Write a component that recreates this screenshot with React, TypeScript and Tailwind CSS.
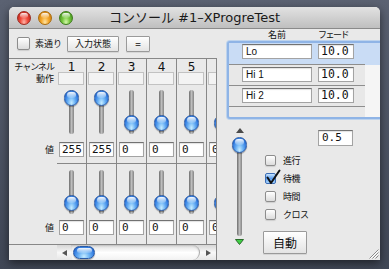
import React from "react";

const jp = "font-['Noto_Sans_CJK_JP',sans-serif]";
const ui = "font-['DejaVu_Sans','Noto_Sans_CJK_JP',sans-serif]";
const mono = "font-['DejaVu_Sans_Mono',monospace]";
const blueBall =
  "border border-[#2a5aa6] bg-[radial-gradient(ellipse_at_50%_85%,#c6ecff_0%,#6db3f5_38%,#2f78dd_75%,#1b4fa8_100%)] shadow-[0_1px_1px_rgba(0,0,0,0.35)]";

function Light({ tone }: { tone: "red" | "amber" | "green" }) {
  const fill = {
    red: "border-[#9a2a20] bg-[radial-gradient(ellipse_at_50%_85%,#ffb3a6_0%,#f0493a_45%,#b01d12_100%)]",
    amber: "border-[#a86a0c] bg-[radial-gradient(ellipse_at_50%_85%,#ffe3a0_0%,#f4a62a_45%,#c27208_100%)]",
    green: "border-[#3c7a1c] bg-[radial-gradient(ellipse_at_50%_85%,#d2f7a8_0%,#73c53c_45%,#3d8a18_100%)]",
  }[tone];
  return (
    <div className={`w-[14px] h-[14px] rounded-full border ${fill}`}>
      <div className="mx-auto mt-[1px] h-[5px] w-[8px] rounded-full bg-linear-to-b from-white/90 to-white/10" />
    </div>
  );
}

function Field({ value, className, text }: { value: string; className: string; text?: string }) {
  return (
    <div
      className={`h-[15px] shrink-0 overflow-hidden whitespace-nowrap bg-white border border-[#a3a3a3] border-t-[#727272] shadow-[inset_0_1px_1px_rgba(0,0,0,0.12)] pl-[2px] leading-[13px] text-[#111] ${
        text ?? `${mono} text-[11px]`
      } ${className}`}
    >
      {value}
    </div>
  );
}

function Thumb({ className }: { className: string }) {
  return (
    <div className={`absolute left-0 w-[15px] h-[16px] rounded-full ${blueBall} ${className}`}>
      <div className="mx-auto mt-[1px] h-[6px] w-[9px] rounded-full bg-linear-to-b from-white/95 to-white/15" />
    </div>
  );
}

function VSlider({ atTop }: { atTop: boolean }) {
  return (
    <div className="relative mx-auto h-[44px] w-[15px] shrink-0">
      <div className="mx-auto h-full w-[5px] rounded-full bg-linear-to-r from-[#6e6e6e] via-[#bdbdbd] to-[#858585]" />
      <Thumb className={atTop ? "top-0" : "top-[25px]"} />
    </div>
  );
}

function Channel({ n, top }: { n: number; top: string }) {
  return (
    <div className="w-[30px] shrink-0 flex flex-col border-r border-[#878787]">
      <div className={`h-[13px] pt-[2px] text-center text-[12px] leading-[12px] ${ui} text-[#111]`}>{n}</div>
      <div className="h-[14px]">
        <div className="ml-[1px] h-[13px] w-[26px] border border-[#c2c2c2] bg-[#f3f3f3]" />
      </div>
      <div className="h-[4px]" />
      <VSlider atTop={top === "255"} />
      <div className="h-[8px]" />
      <Field value={top} className="ml-[2px] w-[25px]" />
      <div className="h-[7px] border-b border-[#878787]" />
      <div className="h-[6px]" />
      <VSlider atTop={false} />
      <div className="h-[6px]" />
      <Field value="0" className="ml-[2px] w-[25px]" />
    </div>
  );
}

function Labels() {
  const t = `${jp} text-[9px] text-[#111] text-right pr-[3px]`;
  return (
    <div className="w-[48px] shrink-0 flex flex-col">
      <div className={`h-[13px] pt-[3px] leading-[10px] tracking-[-1px] ${t}`}>チャンネル</div>
      <div className={`h-[14px] leading-[13px] ${t}`}>動作</div>
      <div className="h-[56px]" />
      <div className={`h-[15px] leading-[15px] ${t}`}>値</div>
      <div className="h-[63px]" />
      <div className={`h-[15px] leading-[15px] ${t}`}>値</div>
    </div>
  );
}

function HScroll() {
  return (
    <div className="flex-1 flex h-[15px] bg-linear-to-b from-[#d6d6d6] via-[#f8f8f8] to-[#e6e6e6]">
      <div className="w-[14px] flex items-center justify-center">
        <div className="h-0 w-0 border-y-[3px] border-y-transparent border-r-[5px] border-r-[#555]" />
      </div>
      <div className="flex-1 flex items-center rounded-r-[8px] border-r border-[#ababab] bg-linear-to-b from-[#dedede] via-white to-[#f2f2f2] shadow-[inset_0_1px_2px_rgba(0,0,0,0.15)]">
        <div className={`ml-[2px] h-[13px] w-[22px] rounded-full ${blueBall}`}>
          <div className="mx-auto mt-[1px] h-[5px] w-[15px] rounded-full bg-linear-to-b from-white/95 to-white/15" />
        </div>
      </div>
      <div className="w-[16px] flex items-center justify-center">
        <div className="h-0 w-0 border-y-[3px] border-y-transparent border-l-[5px] border-l-[#555]" />
      </div>
    </div>
  );
}

function Check({ checked, big }: { checked?: boolean; big?: boolean }) {
  const dim = big ? "w-[13px] h-[13px]" : "w-[11px] h-[11px]";
  if (checked) {
    return (
      <div className={`relative shrink-0 rounded-[2px] border border-[#3c6db5] bg-linear-to-b from-[#c9e6ff] via-[#5c9cec] to-[#a8d6ff] ${dim}`}>
        <svg className="absolute left-0 top-[-5px] overflow-visible" width="15" height="15" viewBox="0 0 15 15">
          <path d="M1.5 8.5 L5 14 L13.5 1.5" fill="none" stroke="#111" strokeWidth="2" strokeLinejoin="round" strokeLinecap="round" />
        </svg>
      </div>
    );
  }
  return (
    <div className={`shrink-0 rounded-[2px] border border-[#8d8d8d] bg-linear-to-b from-white to-[#dcdcdc] shadow-[0_1px_1px_rgba(0,0,0,0.12)] ${dim}`} />
  );
}

function Button({ label, className }: { label: string; className: string }) {
  return (
    <div
      className={`flex shrink-0 items-center justify-center border border-[#9a9a9a] rounded-[1px] bg-linear-to-b from-white to-[#e4e4e4] shadow-[0_1px_0_rgba(0,0,0,0.08)] text-[#111] ${jp} ${className}`}
    >
      {label}
    </div>
  );
}

function LeftPanel() {
  const chans = [
    { n: 1, top: "255" },
    { n: 2, top: "255" },
    { n: 3, top: "0" },
    { n: 4, top: "0" },
    { n: 5, top: "0" },
    { n: 6, top: "0" },
  ];
  return (
    <div className="w-[208px] shrink-0 flex flex-col">
      <div className="h-[29px] shrink-0 flex items-center pl-[8px]">
        <Check big />
        <span className={`ml-[5px] w-[27px] shrink-0 text-[9px] text-[#111] ${jp}`}>素通り</span>
        <Button label="入力状態" className="ml-[5px] w-[52px] h-[16px] text-[9px]" />
        <Button label="=" className="ml-[7px] w-[24px] h-[16px] text-[10px]" />
      </div>
      <div className="flex-1 flex flex-col border-t border-r border-[#878787] min-h-0">
        <div className="flex h-[185px] overflow-hidden">
          <Labels />
          {chans.map((c) => (
            <Channel key={c.n} n={c.n} top={c.top} />
          ))}
        </div>
        <div className="flex h-[16px] border-t border-[#878787]">
          <div className="w-[48px] shrink-0" />
          <HScroll />
        </div>
      </div>
    </div>
  );
}

function Row({ name, fade, first }: { name: string; fade: string; first?: boolean }) {
  return (
    <div
      className={`flex items-start border-b border-[#8e8e8e] ${
        first ? "h-[22px] pt-[1px] bg-[#c9dcf5]" : "h-[21px] pt-[2px]"
      }`}
    >
      <Field value={name} className="ml-[13px] w-[70px] pl-[3px]" text="font-['Liberation_Sans',sans-serif] text-[10px]" />
      <Field value={fade} className="ml-[6px] w-[36px] pl-[2px]" text={`${mono} text-[11.5px]`} />
    </div>
  );
}

function RightPanel() {
  return (
    <div className="flex-1 flex flex-col overflow-hidden">
      <div className={`h-[12px] shrink-0 flex items-center text-[9px] text-[#111] ${jp}`}>
        <span className="ml-[51px] shrink-0">名前</span>
        <span className="ml-[32px] shrink-0 tracking-[-1.5px]">フェード</span>
      </div>
      <div className="ml-[10px] w-[155px] h-[78px] shrink-0 flex rounded-[3px] border-2 border-[#8fb4e6] shadow-[0_0_0_1px_rgba(160,196,240,0.6)] bg-[#e8e8e8]">
        <div className="w-[136px] shrink-0 flex flex-col">
          <Row name="Lo" fade="10.0" first />
          <Row name="Hi 1" fade="10.0" />
          <Row name="Hi 2" fade="10.0" />
        </div>
        <div className="flex-1 flex flex-col">
          <div className="h-[22px] bg-[#c9dcf5]" />
          <div className="flex-1 bg-[#f5f5f5]" />
        </div>
      </div>
      <div className="flex">
        <div className="ml-[15px] w-[15px] shrink-0 flex flex-col items-center">
          <div className="mt-[9px] h-0 w-0 border-x-[4px] border-x-transparent border-b-[5px] border-b-[#4a4a4a]" />
          <div className="relative mt-[2px] h-[102px] w-[15px]">
            <div className="mx-auto mt-[4px] h-[97px] w-[5px] rounded-full bg-linear-to-r from-[#6e6e6e] via-[#bdbdbd] to-[#858585]" />
            <Thumb className="top-[2px]" />
          </div>
          <svg className="mt-[2px]" width="9" height="6" viewBox="0 0 9 6">
            <polygon points="0.5,0.5 8.5,0.5 4.5,5.5" fill="#3fcf45" stroke="#2a6a2a" strokeWidth="1" />
          </svg>
        </div>
        <div className="ml-[16px] flex flex-col">
          <Field value="0.5" className="mt-[11px] ml-[55px] w-[35px] h-[16px] leading-[14px] pl-[3px]" />
          <div className="mt-[9px] ml-[2px] flex flex-col gap-[7px]">
            {[
              { l: "進行", c: false },
              { l: "待機", c: true },
              { l: "時間", c: false },
              { l: "クロス", c: false },
            ].map((r) => (
              <div key={r.l} className="flex h-[11px] items-center">
                <Check checked={r.c} />
                <span className={`ml-[7px] text-[9px] leading-[11px] tracking-[-0.5px] text-[#111] ${jp}`}>{r.l}</span>
              </div>
            ))}
          </div>
          <Button label="自動" className="mt-[11px] w-[44px] h-[23px] text-[12px]" />
        </div>
      </div>
    </div>
  );
}

export default function App() {
  return (
    <div className="w-[389px] h-[269px] overflow-hidden bg-linear-to-b from-[#5b6272] to-[#404756] pt-[7px] pl-[9px]">
      <div className="relative w-[371px] h-[253px] flex flex-col rounded-t-[5px] bg-[#e9e9e9] shadow-[0_3px_10px_rgba(0,0,0,0.55)] overflow-hidden">
        <div className="grid grid-cols-[1fr_auto_1fr] items-center h-[22px] shrink-0 rounded-t-[5px] border-b border-[#8a8a8a] bg-linear-to-b from-[#e2e2e2] to-[#bfbfbf]">
          <div className="flex items-center gap-[7px] pl-[8px]">
            <Light tone="red" />
            <Light tone="amber" />
            <Light tone="green" />
          </div>
          <div className={`text-[13px] leading-[16px] text-[#1a1a1a] ${ui}`}>コンソール #1–XProgreTest</div>
          <div />
        </div>
        <div className="flex flex-1 min-h-0">
          <LeftPanel />
          <RightPanel />
        </div>
        <svg className="absolute right-[1px] bottom-[1px]" width="13" height="13" viewBox="0 0 13 13">
          <g stroke="#8a8a8a" strokeWidth="1">
            <line x1="12.5" y1="3.5" x2="3.5" y2="12.5" />
            <line x1="12.5" y1="6.5" x2="6.5" y2="12.5" />
            <line x1="12.5" y1="9.5" x2="9.5" y2="12.5" />
          </g>
          <g stroke="#ffffff" strokeWidth="1">
            <line x1="12.5" y1="4.5" x2="4.5" y2="12.5" />
            <line x1="12.5" y1="7.5" x2="7.5" y2="12.5" />
          </g>
        </svg>
      </div>
    </div>
  );
}
